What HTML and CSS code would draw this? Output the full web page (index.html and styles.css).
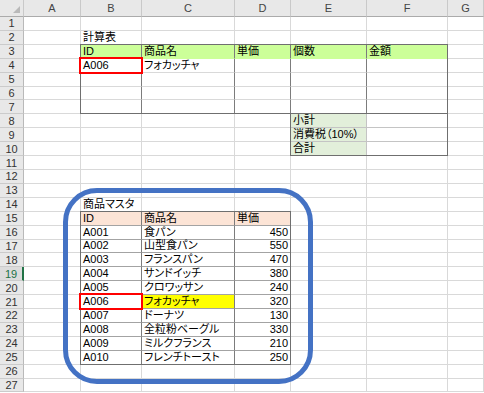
FILE: index.html
```html
<!DOCTYPE html>
<html lang="ja">
<head>
<meta charset="utf-8">
<title>計算表</title>
<link rel="stylesheet" href="styles.css">
</head>
<body>
<div class="sheet">
  <div class="corner"></div><div class="ch">A</div><div class="ch">B</div><div class="ch">C</div><div class="ch">D</div><div class="ch">E</div><div class="ch">F</div><div class="ch">G</div>

  <div class="rh">1</div><div class="c"></div><div class="c"></div><div class="c"></div><div class="c"></div><div class="c"></div><div class="c"></div><div class="c"></div>
  <div class="rh">2</div><div class="c"></div><div class="c">計算表</div><div class="c"></div><div class="c"></div><div class="c"></div><div class="c"></div><div class="c"></div>
  <div class="rh">3</div><div class="c"></div><div class="c fg vd">ID</div><div class="c fg vd">商品名</div><div class="c fg vd">単価</div><div class="c fg vd">個数</div><div class="c fg">金額</div><div class="c"></div>
  <div class="rh">4</div><div class="c"></div><div class="c vd">A006</div><div class="c vd">フォカッチャ</div><div class="c vd"></div><div class="c vd"></div><div class="c"></div><div class="c"></div>
  <div class="rh">5</div><div class="c"></div><div class="c vd"></div><div class="c vd"></div><div class="c vd"></div><div class="c vd"></div><div class="c"></div><div class="c"></div>
  <div class="rh">6</div><div class="c"></div><div class="c vd"></div><div class="c vd"></div><div class="c vd"></div><div class="c vd"></div><div class="c"></div><div class="c"></div>
  <div class="rh">7</div><div class="c"></div><div class="c vd"></div><div class="c vd"></div><div class="c vd"></div><div class="c vd"></div><div class="c"></div><div class="c"></div>
  <div class="rh">8</div><div class="c"></div><div class="c"></div><div class="c"></div><div class="c"></div><div class="c fl lb">小計</div><div class="c lbb"></div><div class="c"></div>
  <div class="rh">9</div><div class="c"></div><div class="c"></div><div class="c"></div><div class="c"></div><div class="c fl lb">消費税（10%）</div><div class="c lbb"></div><div class="c"></div>
  <div class="rh">10</div><div class="c"></div><div class="c"></div><div class="c"></div><div class="c"></div><div class="c fl lb">合計</div><div class="c"></div><div class="c"></div>
  <div class="rh">11</div><div class="c"></div><div class="c"></div><div class="c"></div><div class="c"></div><div class="c"></div><div class="c"></div><div class="c"></div>
  <div class="rh">12</div><div class="c"></div><div class="c"></div><div class="c"></div><div class="c"></div><div class="c"></div><div class="c"></div><div class="c"></div>
  <div class="rh">13</div><div class="c"></div><div class="c"></div><div class="c"></div><div class="c"></div><div class="c"></div><div class="c"></div><div class="c"></div>
  <div class="rh">14</div><div class="c"></div><div class="c">商品マスタ</div><div class="c"></div><div class="c"></div><div class="c"></div><div class="c"></div><div class="c"></div>
  <div class="rh">15</div><div class="c"></div><div class="c fp vd hd">ID</div><div class="c fp vd hd">商品名</div><div class="c fp hd">単価</div><div class="c"></div><div class="c"></div><div class="c"></div>
  <div class="rh">16</div><div class="c"></div><div class="c vd hd">A001</div><div class="c vd hd">食パン</div><div class="c hd r">450</div><div class="c"></div><div class="c"></div><div class="c"></div>
  <div class="rh">17</div><div class="c"></div><div class="c vd hd">A002</div><div class="c vd hd">山型食パン</div><div class="c hd r">550</div><div class="c"></div><div class="c"></div><div class="c"></div>
  <div class="rh">18</div><div class="c"></div><div class="c vd hd">A003</div><div class="c vd hd">フランスパン</div><div class="c hd r">470</div><div class="c"></div><div class="c"></div><div class="c"></div>
  <div class="rh sel">19</div><div class="c"></div><div class="c vd hd">A004</div><div class="c vd hd">サンドイッチ</div><div class="c hd r">380</div><div class="c"></div><div class="c"></div><div class="c"></div>
  <div class="rh">20</div><div class="c"></div><div class="c vd hd">A005</div><div class="c vd hd">クロワッサン</div><div class="c hd r">240</div><div class="c"></div><div class="c"></div><div class="c"></div>
  <div class="rh">21</div><div class="c"></div><div class="c vd hd">A006</div><div class="c fy vd hd">フォカッチャ</div><div class="c hd r">320</div><div class="c"></div><div class="c"></div><div class="c"></div>
  <div class="rh">22</div><div class="c"></div><div class="c vd hd">A007</div><div class="c vd hd">ドーナツ</div><div class="c hd r">130</div><div class="c"></div><div class="c"></div><div class="c"></div>
  <div class="rh">23</div><div class="c"></div><div class="c vd hd">A008</div><div class="c vd hd">全粒粉ベーグル</div><div class="c hd r">330</div><div class="c"></div><div class="c"></div><div class="c"></div>
  <div class="rh">24</div><div class="c"></div><div class="c vd hd">A009</div><div class="c vd hd">ミルクフランス</div><div class="c hd r">210</div><div class="c"></div><div class="c"></div><div class="c"></div>
  <div class="rh">25</div><div class="c"></div><div class="c vd">A010</div><div class="c vd">フレンチトースト</div><div class="c r">250</div><div class="c"></div><div class="c"></div><div class="c"></div>
  <div class="rh">26</div><div class="c"></div><div class="c"></div><div class="c"></div><div class="c"></div><div class="c"></div><div class="c"></div><div class="c"></div>
  <div class="rh">27</div><div class="c"></div><div class="c"></div><div class="c"></div><div class="c"></div><div class="c"></div><div class="c"></div><div class="c"></div>

  <div class="box box-calc"></div>
  <div class="box box-total"></div>
  <div class="box box-master"></div>
  <div class="pick pick-calc"></div>
  <div class="pick pick-master"></div>
  <div class="callout"></div>
</div>
</body>
</html>
```

FILE: styles.css
```css
* { box-sizing: border-box; }

body {
  margin: 0;
  background: #fff;
  overflow: hidden;
  font-family: "Liberation Sans", "Noto Sans CJK JP", sans-serif;
}

.sheet {
  position: relative;
  display: grid;
  grid-template-columns: 24px 57px 61px 93px 56px 76px 81px 36px;
  grid-template-rows: 17px repeat(27, 13.92px);
  width: 484px;
  font-family: "Liberation Sans", "Noto Sans CJK JP", sans-serif;
  font-size: 11px;
  font-feature-settings: "palt";
  color: #000;
}

.corner,
.ch {
  background: #e8e8e8;
  border-right: 1px solid #c9c9c9;
  border-bottom: 1px solid #ababab;
}

.corner { position: relative; }
.corner::after {
  content: "";
  position: absolute;
  right: 3px;
  bottom: 3px;
  width: 0;
  height: 0;
  border-left: 7px solid transparent;
  border-bottom: 7px solid #b9b9b9;
}

.ch {
  display: flex;
  align-items: center;
  justify-content: center;
  color: #444;
  line-height: 12px;
}

.rh {
  background: #e8e8e8;
  border-right: 1px solid #b9b9b9;
  border-bottom: 1px solid #cbcbcb;
  display: flex;
  align-items: center;
  justify-content: center;
  color: #333;
  line-height: 12px;
}
.rh.sel {
  color: #217346;
  background: #dcdcdc;
  border-right: 2px solid #217346;
}

.c {
  display: flex;
  align-items: flex-end;
  padding: 0 2px 1px;
  line-height: 12px;
  white-space: nowrap;
  min-width: 0;
  border-right: 1px solid #d9d9d9;
  border-bottom: 1px solid #d9d9d9;
}
.r { justify-content: flex-end; }

/* fills */
.fg { background: #ccff99; border-color: #ccff99; }
.fl { background: #e2efda; border-color: #e2efda; }
.fp { background: #fce4d6; border-color: #fce4d6; }
.fy { background: #ffff00; border-color: #ffff00; }

/* borders */
.vd { border-right-color: #7c7c7c; }
.hd { border-bottom-color: #a3a3a3; }
.lb { border-right-color: #c4c4c4; border-bottom-color: #c4c4c4; }
.lbb { border-bottom-color: #c4c4c4; }

/* outer table frames */
.box {
  position: absolute;
  top: -1px;
  left: -1px;
  right: 0;
  bottom: 0;
  border: 1px solid #6f6f6f;
  pointer-events: none;
}
.box-calc { grid-row: 4 / 9; grid-column: 3 / 8; }
.box-total { grid-row: 9 / 12; grid-column: 6 / 8; }
.box-master { grid-row: 16 / 27; grid-column: 3 / 6; }

/* red selection frames */
.pick {
  position: absolute;
  top: -2px;
  left: -2px;
  right: -1px;
  bottom: -1px;
  border: 2px solid #ff0000;
}
.pick-calc { grid-row: 5 / 6; grid-column: 3 / 4; }
.pick-master { grid-row: 22 / 23; grid-column: 3 / 4; }

/* blue rounded callout */
.callout {
  position: absolute;
  left: 63px;
  top: 188px;
  width: 250px;
  height: 196px;
  border: 5px solid #4472c4;
  border-radius: 34px;
}
```
